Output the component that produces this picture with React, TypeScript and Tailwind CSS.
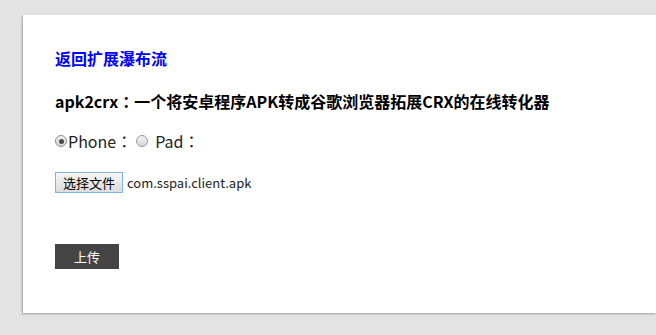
const Colon = () => <span className="font-['Noto_Sans_CJK_TC',sans-serif]">：</span>;

export default function App() {
  return (
    <div className="h-[335px] overflow-hidden bg-[#e3e3e3] pl-[23px] pt-[15px] font-['Noto_Sans_CJK_SC','Microsoft_YaHei',sans-serif]">
      <div className="h-[298px] bg-white pl-[32px] pt-[33px] shadow-[-1px_1px_2px_rgba(0,0,0,0.3)]">
        <a href="#" className="block w-fit text-[16px] font-bold leading-5 text-[#0000ff]">
          返回扩展瀑布流
        </a>

        <h1 className="mt-[23px] text-[16px] font-bold leading-5 text-black">
          apk2crx<Colon />一个将安卓程序APK转成谷歌浏览器拓展CRX的在线转化器
        </h1>

        <div className="mt-[20px] flex items-center text-[16px] leading-5 text-[#222]">
          <span className="flex h-[12px] w-[12px] items-center justify-center rounded-full border border-[#8f8f8f] bg-gradient-to-b from-[#f2f2f2] to-[#d6d6d6]">
            <span className="h-[5px] w-[5px] rounded-full bg-[#4a4a4a]" />
          </span>
          <span className="ml-[1px]">
            Phone<Colon />
          </span>
          <span className="ml-[4px] h-[12px] w-[12px] rounded-full border border-[#9a9a9a] bg-gradient-to-b from-[#f2f2f2] to-[#d6d6d6]" />
          <span className="ml-[7px]">
            Pad<Colon />
          </span>
        </div>

        <div className="mt-[21px] flex items-center">
          <button
            type="button"
            className="h-[21px] w-[68px] border border-[#7eb4ea] bg-gradient-to-b from-[#f6f6f6] to-[#dcdcdc] text-[13px] leading-none text-black"
          >
            选择文件
          </button>
          <span className="ml-[4px] text-[13px] leading-5 text-[#222]">com.sspai.client.apk</span>
        </div>

        <button
          type="button"
          className="mt-[51px] block h-[25px] w-[64px] bg-[#444444] text-[13px] text-white"
        >
          上传
        </button>
      </div>
    </div>
  );
}
